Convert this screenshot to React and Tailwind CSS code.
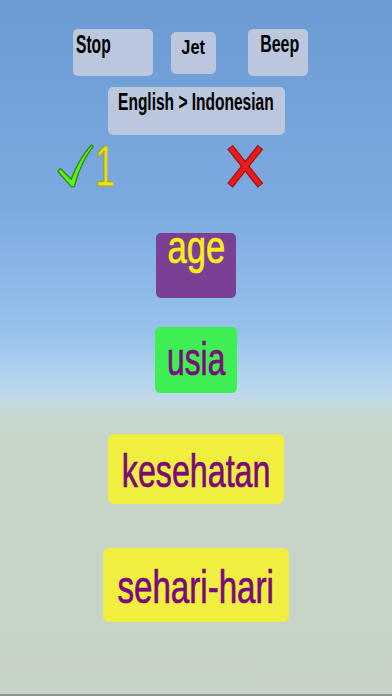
import React from "react";

function Check() {
  return (
    <svg width="37" height="44" viewBox="0 0 37 44" className="block shrink-0">
      <path
        d="M0.8,27.2 L3.4,24.6 L14.2,35.2 C19,22.5 26,10.5 34.2,1 L36.2,2.4 C28.2,12.5 21.4,26 17.4,42.6 L14.2,42.6 Z"
        fill="#5df021"
        stroke="#2f8d14"
        strokeWidth="1.4"
        strokeLinejoin="round"
      />
    </svg>
  );
}

function Cross() {
  return (
    <svg width="37" height="44" viewBox="0 0 37 44" className="block shrink-0">
      <g stroke="#9c1212" strokeWidth="7" strokeLinecap="butt">
        <line x1="3" y1="3" x2="33.5" y2="41.5" />
        <line x1="33.5" y1="3" x2="3" y2="41.5" />
      </g>
      <g stroke="#ec1a1a" strokeWidth="4.6" strokeLinecap="butt">
        <line x1="3.6" y1="3.8" x2="32.9" y2="40.7" />
        <line x1="32.9" y1="3.8" x2="3.6" y2="40.7" />
      </g>
    </svg>
  );
}

export default function App() {
  return (
    <div className="relative flex h-[696px] w-[392px] flex-col overflow-hidden border-b-2 border-[#8a948a] bg-[linear-gradient(to_bottom,#6b9ad4_0%,#7caae0_30%,#98c2ec_48%,#b4d5ee_55%,#c0d9e6_57.5%,#c7d8cf_60%,#c8d6c9_63%,#c6d3c6_100%)] font-['Liberation_Sans',Arial,sans-serif]">
      {/* top buttons */}
      <div className="flex items-start pl-[73px] pt-[29px]">
        <div className="h-[47px] w-[80px] rounded-[5px] bg-[#bac7dc] pl-[3px] pt-[2px]">
          <span className="inline-block origin-left scale-x-[0.6] whitespace-nowrap text-[26px] font-bold leading-[26px] text-black">
            Stop
          </span>
        </div>
        <div className="ml-[18px] mt-[3px] flex h-[42px] w-[45px] justify-center rounded-[5px] bg-[#bac7dc] pt-[4px]">
          <span className="inline-block scale-x-[0.78] whitespace-nowrap text-[21px] font-bold leading-[21px] text-black">
            Jet
          </span>
        </div>
        <div className="ml-[32px] flex h-[47px] w-[60px] justify-center rounded-[5px] bg-[#bac7dc] pl-[3px] pt-[4px]">
          <span className="inline-block scale-x-[0.68] whitespace-nowrap text-[23.5px] font-bold leading-[23.5px] text-black">
            Beep
          </span>
        </div>
      </div>

      <div className="mt-[11px] flex h-[48px] w-[177px] justify-center self-center rounded-[5px] bg-[#bac7dc] pt-[4px]">
        <span className="inline-block scale-x-[0.66] whitespace-nowrap text-[23.5px] font-bold leading-[23.5px] text-black">
          English &gt; Indonesian
        </span>
      </div>

      {/* score row */}
      <div className="mt-[9px] flex h-[44px] items-start pl-[57px]">
        <div className="flex w-[170px] items-start">
          <Check />
          <span className="-mt-[7px] ml-[1px] inline-block origin-left scale-x-[0.62] text-[58px] leading-[58px] text-[#e9e31a] [-webkit-text-stroke:1.2px_#b0a812]">
            1
          </span>
        </div>
        <Cross />
      </div>

      {/* word boxes */}
      <div className="mt-[45px] flex h-[65px] w-[80px] justify-center self-center rounded-[5px] bg-[#7c3f96]">
        <span className="-mt-[9px] inline-block h-[46px] scale-x-[0.75] whitespace-nowrap text-[46px] leading-[46px] text-[#f8ee1a] [-webkit-text-stroke:0.7px_#f8ee1a]">
          age
        </span>
      </div>

      <div className="mt-[29px] flex h-[66px] w-[82px] justify-center self-center rounded-[5px] bg-[#3eee53] pt-[9px]">
        <span className="inline-block h-[46px] scale-x-[0.69] whitespace-nowrap text-[46px] leading-[46px] text-[#7a0c7c] [-webkit-text-stroke:0.7px_#7a0c7c]">
          usia
        </span>
      </div>

      <div className="mt-[41px] flex h-[70px] w-[176px] justify-center self-center rounded-[6px] bg-[#f0ef40] pt-[14px]">
        <span className="inline-block h-[46px] scale-x-[0.7] whitespace-nowrap text-[46px] leading-[46px] text-[#7a0a7c] [-webkit-text-stroke:0.7px_#7a0a7c]">
          kesehatan
        </span>
      </div>

      <div className="mt-[44px] flex h-[74px] w-[186px] justify-center self-center rounded-[6px] bg-[#f0ef40] pt-[16px]">
        <span className="inline-block h-[46px] scale-x-[0.72] whitespace-nowrap text-[46px] leading-[46px] text-[#7a0a7c] [-webkit-text-stroke:0.7px_#7a0a7c]">
          sehari-hari
        </span>
      </div>
    </div>
  );
}
